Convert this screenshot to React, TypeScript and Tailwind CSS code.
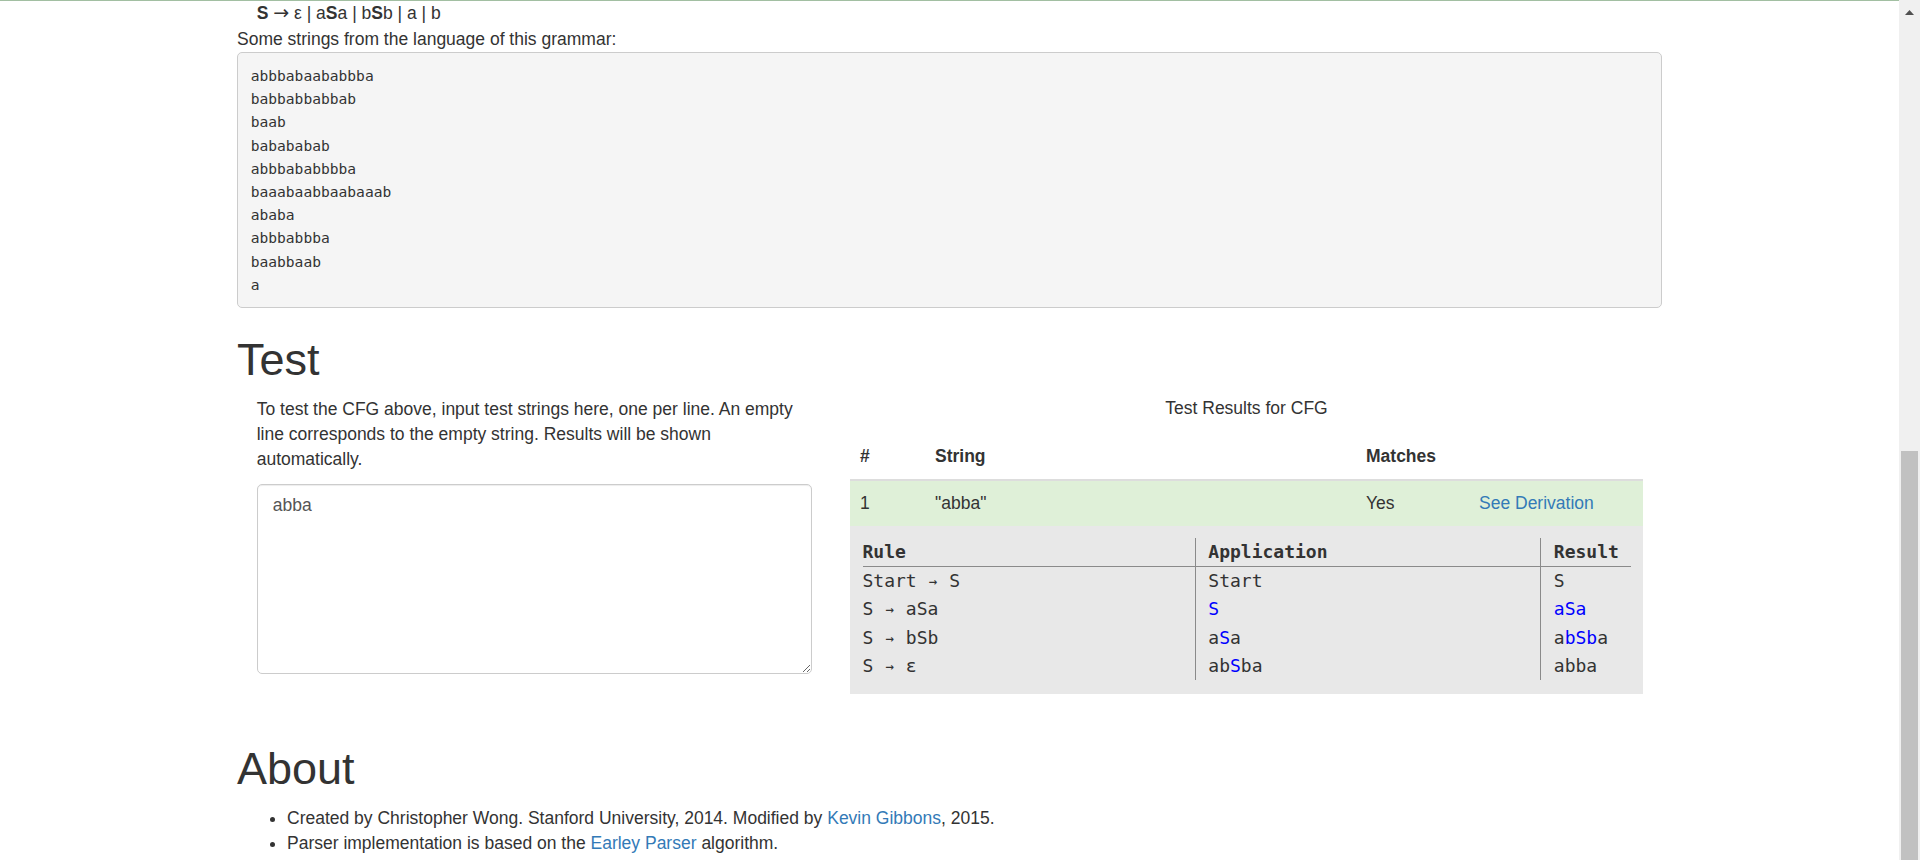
import React from "react";

const B = ({ children }: { children: React.ReactNode }) => (
  <span className="text-[#0000ff]">{children}</span>
);

const Arr = () => (
  <span className="inline-block w-[10.84px] text-center align-top text-[14px] leading-[28.33px]">→</span>
);

const strings = [
  "abbbabaababbba",
  "babbabbabbab",
  "baab",
  "babababab",
  "abbbababbbba",
  "baaabaabbaabaaab",
  "ababa",
  "abbbabbba",
  "baabbaab",
  "a",
];

const derivRows: [React.ReactNode, React.ReactNode, React.ReactNode][] = [
  [<>Start <Arr /> S</>, <>Start</>, <>S</>],
  [<>S <Arr /> aSa</>, <B>S</B>, <B>aSa</B>],
  [<>S <Arr /> bSb</>, <>a<B>S</B>a</>, <>a<B>bSb</B>a</>],
  [<>S <Arr /> ε</>, <>ab<B>S</B>ba</>, <>abba</>],
];

export default function App() {
  return (
    <div className="flex h-[860px] w-[1920px] overflow-hidden bg-white font-['Liberation_Sans',Arial,sans-serif] text-[17.5px] leading-[25px] text-[#333]">
      <div className="flex-1 border-t border-[#a2bfa2]">
        <div className="ml-[237px] w-[1425px]">
          <div className="h-[25px] overflow-hidden pl-[19.7px]">
            <b>S</b> <span className="font-['DejaVu_Sans',sans-serif] text-[19px] leading-[17px]">→</span> ε | a<b>S</b>a | b<b>S</b>b | a | b
          </div>
          <div className="pt-[1px]">Some strings from the language of this grammar:</div>
          <pre className="rounded-[5px] border border-[#ccc] bg-[#f5f5f5] pb-[11px] pl-[12.7px] pt-[11px] font-['DejaVu_Sans_Mono',monospace] text-[14.6px] leading-[23.2px] text-[#333]">
            {strings.map((s, i) => (
              <div key={i}>{s}</div>
            ))}
          </pre>

          <h1 className="mt-[27px] text-[45px] font-normal leading-[49.5px] text-[#333]">Test</h1>
          <div className="mt-[12.5px] flex">
            <div className="w-[613px] pl-[19.7px]">
              <p className="w-[555px]">
                To test the CFG above, input test strings here, one per line. An empty line corresponds to the empty
                string. Results will be shown automatically.
              </p>
              <textarea
                className="mt-[12px] block h-[189.5px] w-[555px] rounded-[5px] border-[1.25px] border-[#ccc] px-[15px] py-[7.5px] text-[17.5px] leading-[25px] text-[#555] shadow-[inset_0_1px_1px_rgba(0,0,0,0.075)] outline-none"
                defaultValue="abba"
              />
            </div>
            <div className="-mt-[1.5px] w-[793px]">
              <div className="pb-[13px] text-center">Test Results for CFG</div>
              <div className="grid grid-cols-[75px_431px_113px_174px] border-b-[2.5px] border-[#ddd] font-bold">
                <div className="p-[10px]">#</div>
                <div className="p-[10px]">String</div>
                <div className="p-[10px]">Matches</div>
                <div className="p-[10px]"></div>
              </div>
              <div className="grid grid-cols-[75px_431px_113px_174px] bg-[#dff0d8]">
                <div className="p-[10px]">1</div>
                <div className="p-[10px]">"abba"</div>
                <div className="p-[10px]">Yes</div>
                <div className="p-[10px] text-[#337ab7]">See Derivation</div>
              </div>
              <div className="bg-[#e8e8e8] px-[12.5px] pb-[13.5px] pt-[12.5px]">
                <div className="grid w-[769px] grid-cols-[332.3px_345px_91.7px] grid-rows-[29px_28.33px_28.33px_28.33px_28.33px] font-['DejaVu_Sans_Mono',monospace] text-[18px] leading-[28.33px] text-[#333]">
                  <div className="overflow-hidden border-b border-[#8a8a8a] font-bold">Rule</div>
                  <div className="overflow-hidden border-b border-l border-[#8a8a8a] pl-[12.5px] font-bold">Application</div>
                  <div className="overflow-hidden border-b border-l border-[#8a8a8a] pl-[13px] font-bold">Result</div>
                  {derivRows.map((r, i) => (
                    <React.Fragment key={i}>
                      <div className="overflow-hidden whitespace-nowrap">{r[0]}</div>
                      <div className="overflow-hidden whitespace-nowrap border-l border-[#8a8a8a] pl-[12.5px]">{r[1]}</div>
                      <div className="overflow-hidden whitespace-nowrap border-l border-[#8a8a8a] pl-[13px]">{r[2]}</div>
                    </React.Fragment>
                  ))}
                </div>
              </div>
            </div>
          </div>

          <h1 className="mt-[50px] text-[45px] font-normal leading-[49.5px] text-[#333]">About</h1>
          <ul className="mt-[12.5px] list-disc pl-[50px]">
            <li>
              Created by Christopher Wong. Stanford University, 2014. Modified by{" "}
              <span className="text-[#337ab7]">Kevin Gibbons</span>, 2015.
            </li>
            <li>
              Parser implementation is based on the <span className="text-[#337ab7]">Earley Parser</span> algorithm.
            </li>
          </ul>
        </div>
      </div>
      <div className="flex w-[21px] flex-col bg-[#f0f0f0]">
        <div className="flex h-[21px] items-start justify-center pt-[10px]">
          <svg width="9" height="5" viewBox="0 0 9 5">
            <polygon points="4.5,0 9,5 0,5" fill="#505050" />
          </svg>
        </div>
        <div className="flex-1" />
        <div className="mx-[2px] h-[409px] bg-[#c1c1c1]" />
      </div>
    </div>
  );
}
